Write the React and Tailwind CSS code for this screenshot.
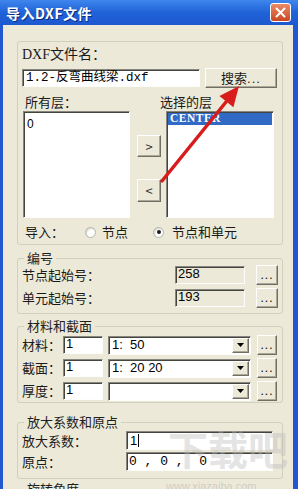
import { useState } from 'react'

// ── shared look (XP dialog) ────────────────────────────────────────────────

const sunken =
  'border border-t-[#878780] border-l-[#878780] border-b-[#fdfdfb] border-r-[#fdfdfb] shadow-[inset_1px_1px_0_#45453f]'
const raised =
  'border border-t-white border-l-white border-b-[#716f64] border-r-[#716f64] shadow-[inset_-1px_-1px_0_#aca899] bg-[#ece9d8]'
const group = 'border border-[#d0d0bf] rounded-[3px]'
const num = "font-['Liberation_Sans',sans-serif] text-[12px] text-black"

function DotsButton({ className = '' }) {
  return (
    <button type="button" className={`${raised} ${className} flex items-end justify-center pb-[3px]`}>
      <span className={`${num} text-[11px] leading-none tracking-[1px]`}>...</span>
    </button>
  )
}

function Radio({ checked }) {
  return (
    <span className="w-[11px] h-[11px] rounded-full border border-[#b4b4aa] bg-white flex items-center justify-center shadow-[inset_1px_1px_1px_#d6d6cc]">
      {checked && <span className="w-[4px] h-[4px] rounded-full bg-[#1c1c1c]" />}
    </span>
  )
}

function Combo({ value }) {
  return (
    <div className={`ml-[5px] w-[143px] h-[19px] bg-white ${sunken} flex items-center`}>
      <span className={`${num} text-[13px] flex-1 pl-[3px] whitespace-pre`}>{value}</span>
      <span className={`${raised} w-[17px] h-[15px] mr-[1px] flex items-center justify-center`}>
        <svg width="7" height="4" viewBox="0 0 7 4">
          <path d="M0 0h7L3.5 4z" fill="#000" />
        </svg>
      </span>
    </div>
  )
}

function Legend({ children }) {
  return (
    <legend className="ml-[2px] px-[3px] text-[13px] leading-[14px] text-[#1e1e1e]">{children}</legend>
  )
}

// ── title bar ──────────────────────────────────────────────────────────────

function TitleBar() {
  return (
    <div className="h-[25px] shrink-0 flex items-center justify-between pl-[6px] pr-[7px] bg-gradient-to-b from-[#3f86ee] via-[#2062d8] to-[#1d58cf]">
      <span className="text-white text-[14px] font-bold leading-none tracking-[0.5px] [text-shadow:1px_1px_0_#0a2a80]">
        导入DXF文件
      </span>
      <button
        type="button"
        className="w-[21px] h-[19px] rounded-[3px] border border-white bg-gradient-to-b from-[#ec8a66] to-[#c9441f] flex items-center justify-center"
      >
        <svg width="11" height="11" viewBox="0 0 11 11">
          <path d="M1.5 1.5l8 8M9.5 1.5l-8 8" stroke="#fff" strokeWidth="2" strokeLinecap="round" />
        </svg>
      </button>
    </div>
  )
}

// ── App ────────────────────────────────────────────────────────────────────

export default function App() {
  const [mode, setMode] = useState('both')

  return (
    <div className="relative w-[298px] h-[489px] overflow-hidden flex flex-col bg-[#ece9d8] font-['Noto_Sans_CJK_SC','Liberation_Sans',sans-serif] text-[13px] text-[#1a1a1a]">
      <TitleBar />

      <div className="flex-1 flex flex-col border-l-[3px] border-r-[5px] border-[#2158d2] pl-[14px] pr-[10px]">
        {/* DXF file */}
        <div className={`mt-[16px] ${group} pl-[4px] pr-[4px] pt-[5px] pb-[4px]`}>
          <div className="h-[16px] leading-[16px] font-['Liberation_Serif','Noto_Sans_CJK_SC',serif] text-[14px]">
            DXF文件名：
          </div>
          <div className="mt-[5px] h-[20px] flex items-center">
            <div className={`w-[178px] h-[18px] bg-white ${sunken} flex items-center pl-[3px] font-['Liberation_Mono','Noto_Sans_CJK_SC',monospace] text-[12.5px] text-black`}>
              1.2-反弯曲线梁.dxf
            </div>
            <button type="button" className={`ml-[5px] w-[72px] h-[20px] ${raised} text-[13px] leading-none`}>
              搜索<span className="font-['Liberation_Sans',sans-serif] tracking-[1px]">...</span>
            </button>
          </div>

          <div className="mt-[6px] h-[16px] leading-[16px] flex">
            <span className="ml-[3px] w-[135px]">所有层：</span>
            <span>选择的层</span>
          </div>

          <div className="mt-[1px] h-[107px] flex">
            <div className={`ml-[1px] w-[107px] h-full bg-white ${sunken} pl-[3px] pt-[1px]`}>
              <span className={num}>0</span>
            </div>
            <div className="ml-[7px] w-[24px] flex flex-col">
              <button type="button" className={`mt-[24px] h-[22px] ${raised} text-[13px] leading-none text-[#333]`}>
                &gt;
              </button>
              <button type="button" className={`mt-[22px] h-[23px] ${raised} text-[13px] leading-none text-[#333]`}>
                &lt;
              </button>
            </div>
            <div className={`ml-[5px] w-[108px] h-full bg-white ${sunken} p-[1px]`}>
              <div className="h-[12px] bg-[#316ac5] flex items-center pl-[2px] font-['Liberation_Serif',serif] font-bold text-[11.5px] text-white tracking-[0.5px]">
                CENTER
              </div>
            </div>
          </div>

          <div className="mt-[6px] h-[16px] flex items-center">
            <span className="ml-[3px] w-[60px]">导入：</span>
            <button type="button" onClick={() => setMode('node')} className="flex items-center">
              <Radio checked={mode === 'node'} />
              <span className="ml-[6px]">节点</span>
            </button>
            <button type="button" onClick={() => setMode('both')} className="ml-[25px] flex items-center">
              <Radio checked={mode === 'both'} />
              <span className="ml-[8px]">节点和单元</span>
            </button>
          </div>
        </div>

        {/* numbering */}
        <fieldset className={`mt-[6px] ${group} pl-[4px] pr-[4px] pb-[5px]`}>
          <Legend>编号</Legend>
          {[
            ['节点起始号：', '258'],
            ['单元起始号：', '193'],
          ].map(([label, value], i) => (
            <div key={label} className={`${i ? 'mt-[3px]' : ''} h-[20px] flex items-center`}>
              <span className="w-[153px]">{label}</span>
              <div className={`w-[70px] h-[18px] bg-[#ece9d8] ${sunken} pl-[2px] leading-[14px] ${num} text-[13px]`}>
                {value}
              </div>
              <DotsButton className="ml-[11px] w-[22px] h-[20px]" />
            </div>
          ))}
        </fieldset>

        {/* material & section */}
        <fieldset className={`mt-[5px] ${group} pl-[4px] pr-[4px] pt-[2px] pb-[1px]`}>
          <Legend>材料和截面</Legend>
          {[
            ['材料：', '1:  50'],
            ['截面：', '1:  20 20'],
            ['厚度：', ''],
          ].map(([label, value], i) => (
            <div key={label} className={`${i ? 'mt-[3px]' : ''} h-[20px] flex items-center`}>
              <span className="w-[41px]">{label}</span>
              <div className={`w-[40px] h-[18px] bg-white ${sunken} pl-[2px] leading-[14px] ${num} text-[13px]`}>1</div>
              <Combo value={value} />
              <DotsButton className="ml-[6px] w-[20px] h-[20px]" />
            </div>
          ))}
        </fieldset>

        {/* scale & origin */}
        <fieldset className={`mt-[12px] ${group} pl-[4px] pr-[4px] pt-[2px] pb-[7px]`}>
          <Legend>放大系数和原点</Legend>
          <div className="h-[19px] flex items-center">
            <span className="w-[104px]">放大系数：</span>
            <div className={`w-[147px] h-[19px] bg-white ${sunken} pl-[3px] flex items-center ${num} text-[13px]`}>
              1<span className="ml-[1px] w-[1px] h-[13px] bg-black" />
            </div>
          </div>
          <div className="mt-[2px] h-[19px] flex items-center">
            <span className="w-[104px]">原点：</span>
            <div className={`w-[147px] h-[19px] bg-white ${sunken} pl-[2px] flex items-center font-['Liberation_Mono',monospace] text-[13px] text-black whitespace-pre`}>
              0 , 0 ,  0
            </div>
          </div>
        </fieldset>

        <fieldset className={`mt-[3px] ${group} pl-[4px] h-[40px]`}>
          <Legend>旋转角度</Legend>
        </fieldset>
      </div>

      {/* annotation arrow */}
      <svg className="absolute inset-0 pointer-events-none" width="298" height="489" viewBox="0 0 298 489">
        <path d="M162 181L226 102" stroke="#d81c1c" strokeWidth="3.5" strokeLinecap="round" />
        <path d="M239 86L219.4 95.9L233.4 107.3Z" fill="#d81c1c" />
      </svg>

      {/* watermark */}
      <div className="absolute left-[168px] top-[428px] pointer-events-none whitespace-nowrap text-[40px] font-bold leading-none text-[#b8b8b8]/40">
        下载吧
      </div>
      <div className="absolute left-[166px] top-[478px] pointer-events-none whitespace-nowrap font-['Liberation_Sans',sans-serif] text-[11px] text-[#b0b0b0]/50">
        www.xiazaiba.com
      </div>
    </div>
  )
}
